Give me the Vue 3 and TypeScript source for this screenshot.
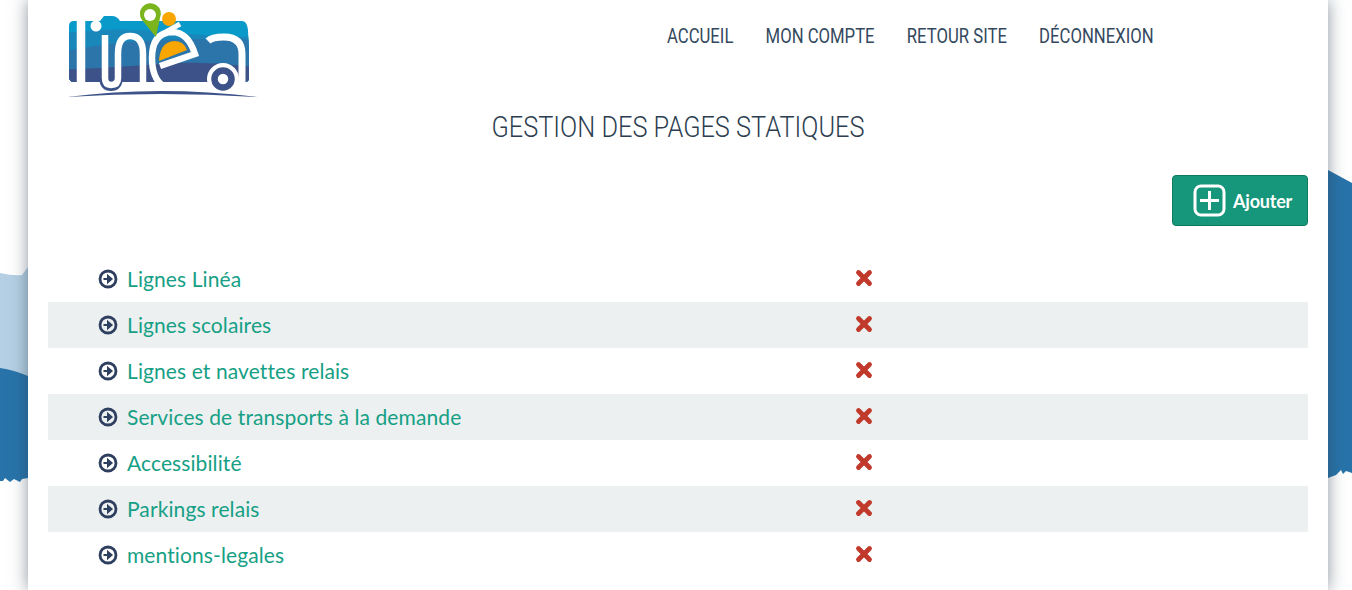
<template>
	<div class="page">
		<svg class="backdrop" width="1352" height="590" viewBox="0 0 1352 590" aria-hidden="true">
			<path d="M0 273 Q14 276 22 275 L28 267 L28 400 L0 400Z" fill="#b5d0e4"/>
			<path d="M0 368 Q14 370 28 376 L28 478 L22 479 L20 482 L14 479 L10 482 L5 478 L3 481 L0 481Z" fill="#2874aa"/>
			<path d="M1328 170 L1352 183 V473 L1346 471 L1343 474 L1341 470 L1336 475 L1328 478Z" fill="#2874aa"/>
		</svg>
		<div class="container">
			<header class="header">
				<svg class="logo" width="200" height="100" viewBox="60 0 200 100" role="img" aria-label="Linéa">
					<defs>
						<clipPath id="bus">
							<path d="M74 21 H100 L104 16 H112 Q117 16 120 21 H242 Q247 21 248 30 L249 52 V78 Q249 82 245 82 H74 Q69 82 69 77 V26 Q69 21 74 21Z"/>
						</clipPath>
					</defs>
					<g clip-path="url(#bus)">
						<rect x="60" y="10" width="200" height="75" fill="#0a9ac9"/>
						<path d="M60 34 Q110 26 170 32 T260 36 V90 H60Z" fill="#1a87bb"/>
						<path d="M60 52 Q110 42 160 40 T260 40 V90 H60Z" fill="#2b75aa"/>
						<path d="M60 70 Q110 68 160 64 T260 68 V90 H60Z" fill="#3c5288"/>
					</g>
					<path d="M81 12 V86" stroke="#fff" stroke-width="8.500" fill="none"/>
					<circle cx="96" cy="26" r="5.500" fill="#fff"/>
					<path d="M99 78 Q100 91 111 91 Q122 91 123 78 H99Z" fill="#3c5288"/>
					<path d="M105 35 V78 Q105 85 111 85 Q118 85 118 78 V54 Q118 36 130 36 Q143 36 143 54 V85" stroke="#fff" stroke-width="6.500" fill="none"/>
					<path d="M159 61 Q160 42 174 41 Q184 41 187 50Z" fill="#f9a600"/>
					<path d="M163 86 Q152 78 152 58 Q152 33 172 32 Q188 32 195 54 L160 66" stroke="#fff" stroke-width="6.500" fill="none"/>
					<path d="M157 37 L180 24" stroke="#fff" stroke-width="5" fill="none"/>
					<path d="M208 41 Q212 37 224 37 Q242 37 242 54 V84" stroke="#fff" stroke-width="7" fill="none"/>
					<circle cx="223" cy="79" r="16" fill="#fff"/>
					<circle cx="223" cy="79" r="8.500" fill="none" stroke="#3c5288" stroke-width="6.500"/>
					<path d="M67 97 Q160 85 258 97 Q160 91 67 97Z" fill="#3c5288"/>
					<path d="M156 37 L142 20 A10.500 10.500 0 1 1 160 18Z" fill="#7ab51d"/>
					<circle cx="150" cy="15" r="6" fill="#fff"/>
					<circle cx="169" cy="19" r="7" fill="#f9a600"/>
				</svg>
				<nav class="nav">
					<a v-for="link in links" :key="link" class="nav-link">{{ link }}</a>
				</nav>
			</header>
			<h1 class="title">GESTION DES PAGES STATIQUES</h1>
			<div class="actions">
				<button class="add-btn">
					<svg width="33" height="33" viewBox="0 0 33 33">
						<rect x="2" y="2" width="29" height="29" rx="6" fill="none" stroke="#fff" stroke-width="3"/>
						<path d="M16.500 7 V26 M7 16.500 H26" stroke="#fff" stroke-width="3"/>
					</svg>
					Ajouter
				</button>
			</div>
			<ul class="list">
				<li v-for="page in pages" :key="page" class="row">
					<span class="name">
						<svg class="arrow" width="20" height="20" viewBox="0 0 20 20">
							<circle cx="10" cy="10" r="8" fill="none" stroke="#2f3f5f" stroke-width="2.800"/>
							<path d="M5.500 10 H11 M10 7 L13.500 10 L10 13Z" stroke="#2f3f5f" stroke-width="2" fill="#2f3f5f"/>
						</svg>
						<a class="page-link">{{ page }}</a>
					</span>
					<svg class="remove" width="18" height="18" viewBox="0 0 18 18">
						<path d="M3.500 3.500 L14.500 14.500 M14.500 3.500 L3.500 14.500" stroke="#c0392b" stroke-width="4.800" stroke-linecap="round"/>
					</svg>
				</li>
			</ul>
		</div>
	</div>
</template>

<script setup lang="ts">
const links: string[] = ['ACCUEIL', 'MON COMPTE', 'RETOUR SITE', 'DÉCONNEXION'];

const pages: string[] = [
	'Lignes Linéa',
	'Lignes scolaires',
	'Lignes et navettes relais',
	'Services de transports à la demande',
	'Accessibilité',
	'Parkings relais',
	'mentions-legales',
];
</script>

<style>
html, body {
	margin: 0;
	height: 590px;
	overflow: hidden;
	background: #fff;
}
</style>

<style scoped>
.page {
	position: relative;
	height: 590px;
	overflow: hidden;
	font-family: 'Lato', sans-serif;
}

.backdrop {
	position: absolute;
	top: 0;
	left: 0;
}

.container {
	position: relative;
	width: 1260px;
	height: 590px;
	margin-left: 28px;
	padding: 0 20px;
	background: #fff;
	box-shadow: 0 0 16px rgba(44, 62, 80, 0.55);
}

.header {
	display: flex;
	height: 100px;
}

.logo {
	margin-left: 12px;
	flex: none;
}

.nav {
	display: flex;
	gap: 40.5px;
	margin-left: 407px;
	padding-top: 25px;
	transform: scaleX(0.795);
	transform-origin: left;
}

.nav-link {
	font-family: 'Roboto', sans-serif;
	font-size: 21px;
	line-height: 23px;
	color: #34495e;
	white-space: nowrap;
}

.title {
	margin: 12px 0 0;
	font-family: 'Roboto', sans-serif;
	font-size: 29px;
	line-height: 30px;
	font-weight: 300;
	text-align: center;
	color: #2c3e50;
	transform: scaleX(0.873);
}

.actions {
	display: flex;
	justify-content: flex-end;
	margin-top: 33px;
}

.add-btn {
	display: flex;
	align-items: center;
	gap: 7px;
	box-sizing: border-box;
	width: 136px;
	height: 51px;
	padding: 0 0 0 20px;
	border: 1px solid #0e7a5f;
	border-radius: 4px;
	background: #16967a;
	color: #fff;
	font-family: 'Lato', sans-serif;
	font-size: 18px;
	font-weight: 700;
	letter-spacing: -0.2px;
}

.list {
	list-style: none;
	margin: 30px 0 0;
	padding: 0;
}

.row {
	display: flex;
	align-items: center;
	height: 46px;
}

.row:nth-child(even) {
	background: #ecf0f1;
}

.name {
	display: flex;
	align-items: center;
	gap: 9px;
	width: 807px;
	padding-left: 50px;
	box-sizing: border-box;
}

.page-link {
	position: relative;
	top: -1px;
	font-size: 21px;
	letter-spacing: 0.1px;
	color: #16a085;
	white-space: nowrap;
}

.remove {
	position: relative;
	top: -1px;
	flex: none;
}
</style>
